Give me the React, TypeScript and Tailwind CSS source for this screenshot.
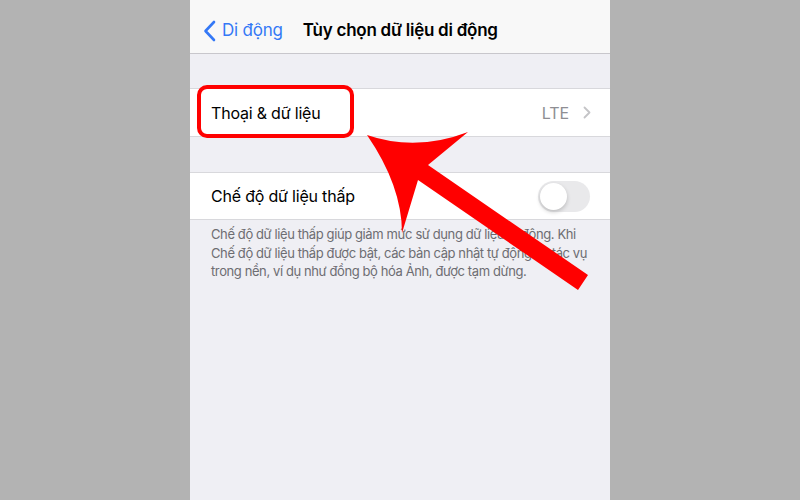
import React from 'react';

const font = { fontFamily: 'Inter, "Noto Sans", sans-serif' };

function ChevronLeft() {
  return (
    <svg width="13" height="22" viewBox="0 0 13 22" fill="none">
      <path d="M11 2L2.5 11L11 20" stroke="#3478f6" strokeWidth="2.6" strokeLinecap="round" strokeLinejoin="round" />
    </svg>
  );
}

function ChevronRight() {
  return (
    <svg width="8" height="13" viewBox="0 0 8 13" fill="none">
      <path d="M1.5 1.5L6.5 6.5L1.5 11.5" stroke="#c4c4c7" strokeWidth="1.8" strokeLinecap="round" strokeLinejoin="round" />
    </svg>
  );
}

export default function App() {
  return (
    <div className="flex h-[500px] w-full justify-center bg-[#b3b3b3]" style={font}>
      <div className="relative flex w-[420px] flex-col bg-[#efeff4]">
        {/* Nav bar */}
        <div className="flex h-[54px] items-center border-b border-[#c8c7cc] bg-[#f8f8f8] pt-[9px]">
          <div className="ml-[13px] flex items-center">
            <ChevronLeft />
            <span className="ml-[6px] text-[17px] tracking-[-0.2px] text-[#3478f6]">Di động</span>
          </div>
          <span className="ml-[20px] text-[17px] font-semibold tracking-[-0.25px] text-black">Tùy chọn dữ liệu di động</span>
        </div>

        {/* Section 1 */}
        <div className="mt-[34px] flex h-[49px] items-center border-y border-[#d8d8dc] bg-white pl-[21px] pr-[19px]">
          <span className="flex-1 text-[16px] tracking-[-0.2px] text-black">Thoại &amp; dữ liệu</span>
          <span className="mr-[14px] text-[16px] tracking-[-0.1px] text-[#8e8e93]">LTE</span>
          <ChevronRight />
        </div>

        {/* Section 2 */}
        <div className="mt-[35px] flex h-[48px] items-center border-y border-[#d8d8dc] bg-white pl-[21px] pr-[20px]">
          <span className="flex-1 text-[16px] tracking-[-0.2px] text-black">Chế độ dữ liệu thấp</span>
          <div className="relative h-[31px] w-[52px] rounded-full bg-[#e9e9eb]">
            <div className="absolute left-[2px] top-[2px] h-[27px] w-[27px] rounded-full bg-white shadow-[0_2px_4px_rgba(0,0,0,0.2)]" />
          </div>
        </div>
        <p className="pl-[21px] pr-[16px] pt-[5px] text-[13px] leading-[18.5px] tracking-[-0.4px] text-[#6d6d72]">
          Chế độ dữ liệu thấp giúp giảm mức sử dụng dữ liệu di động. Khi Chế độ dữ liệu thấp được bật, các bản cập nhật tự động và tác vụ trong nền, ví dụ như đồng bộ hóa Ảnh, được tạm dừng.
        </p>

        {/* Highlight box */}
        <div className="absolute left-[7px] top-[85px] h-[53px] w-[157px] rounded-[10px] border-[4px] border-[#ff0000]" />

        {/* Arrow */}
        <svg className="absolute left-0 top-0" width="420" height="500" viewBox="190 0 420 500">
          <path
            d="M367 135 Q416 152 468 132 L428 165 L588 275 L578 290 L418 180 L402 233 Q402 186 367 135 Z"
            fill="#ff0000"
          />
        </svg>
      </div>
    </div>
  );
}
